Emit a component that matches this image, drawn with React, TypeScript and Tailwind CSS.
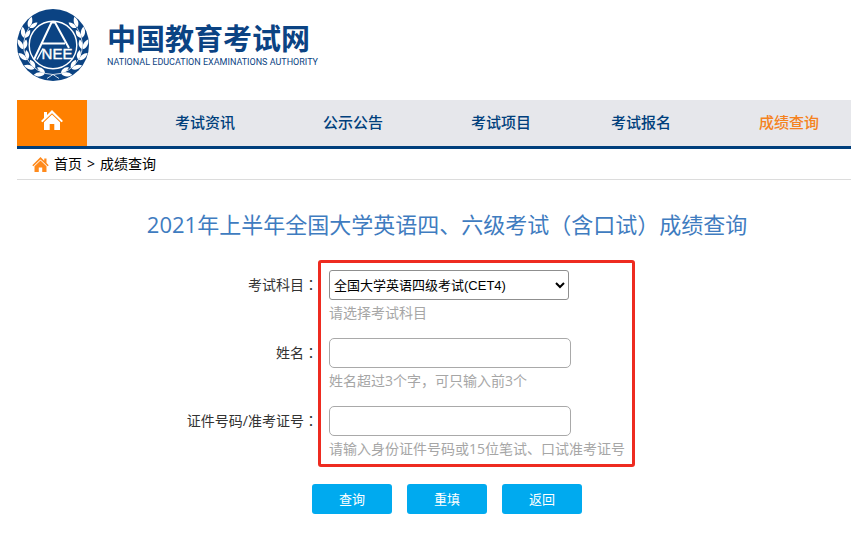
import type { ReactNode } from "react";

const navItems = [
  { label: "考试资讯", className: "pl-22 text-[#003f7c]" },
  { label: "公示公告", className: "pl-22 text-[#003f7c]" },
  { label: "考试项目", className: "pl-22 text-[#003f7c]" },
  { label: "考试报名", className: "pl-20 text-[#003f7c]" },
  { label: "成绩查询", className: "pl-22 text-[#f58220]" },
];

const fields = [
  { id: "subject", label: "考试科目", hint: "请选择考试科目" },
  { id: "name", label: "姓名", hint: "姓名超过3个字，可只输入前3个" },
  {
    id: "ticket",
    label: "证件号码/准考证号",
    hint: "请输入身份证件号码或15位笔试、口试准考证号",
  },
];

// angle around the emblem, measured from the bottom
const leafAngles = [14, 36, 58, 80, 102, 124];

function Branch() {
  return (
    <g>
      <path
        d="M42 69.5 L36 65.5 A29.5 29.5 0 0 1 12 19"
        fill="none"
        stroke="#fff"
        strokeWidth="0.8"
      />
      {leafAngles.map((angle) => (
        <g key={angle} transform={`rotate(${angle} 36 36)`} fill="#fff">
          <path d="M35 65 C33 60.5 29 60.5 26 61.5 C28 64.5 31 66 35 65 Z" />
          <path d="M35 66 C33 70.5 28 71 24.5 69.5 C27 66 31 64.5 35 66 Z" />
        </g>
      ))}
    </g>
  );
}

function Emblem() {
  return (
    <svg viewBox="0 0 72 72" className="h-[72px] w-[72px]" aria-hidden="true">
      <circle cx="36" cy="36" r="36" fill="#0b4383" />
      <Branch />
      <g transform="translate(72 0) scale(-1 1)">
        <Branch />
      </g>
      <circle
        cx="36"
        cy="36"
        r="23.8"
        fill="#0b4383"
        stroke="#fff"
        strokeWidth="1.4"
      />
      <path
        d="M17 50.5 L34.5 13.5 H38 L52 39 M25 34.5 H48"
        fill="none"
        stroke="#fff"
        strokeWidth="2"
      />
      <path
        d="M20 50.5 L26 39.5"
        fill="none"
        stroke="#fff"
        strokeWidth="1.4"
      />
      <text
        x="40"
        y="50"
        textAnchor="middle"
        fill="#fff"
        stroke="#fff"
        strokeWidth="0.4"
        className="font-['Liberation_Sans'] text-[15px]"
      >
        NEE
      </text>
    </svg>
  );
}

function HomeIcon({ className }: { className: string }) {
  return (
    <svg viewBox="0 0 22 20" className={className} aria-hidden="true">
      <path
        fill="currentColor"
        d="M11 0 L16 5 V2 H19 V8 L22 11 L20.5 12.3 L11 3.2 L1.5 12.3 L0 11 Z"
      />
      <path
        fill="currentColor"
        d="M11 4.6 L19 12.2 V20 H13.3 V14 H8.7 V20 H3 V12.2 Z"
      />
    </svg>
  );
}

function ActionButton({
  type = "button",
  children,
}: {
  type?: "button" | "submit" | "reset";
  children: ReactNode;
}) {
  return (
    <button
      type={type}
      className="h-[30px] w-20 rounded-[3px] bg-[#00aaef] text-[13px] text-white"
    >
      {children}
    </button>
  );
}

export default function App() {
  return (
    <div className="bg-white pl-[17px] font-['Open_Sans','Noto_Sans_CJK_SC',sans-serif] text-sm text-black">
      <header className="flex h-[100px] items-start gap-[18px] pt-[9px]">
        <Emblem />
        <div className="pt-3 text-[#0b4383]">
          <div className="text-[29px] leading-9 font-bold">中国教育考试网</div>
          <div className="font-['Roboto','Liberation_Sans',sans-serif] text-[9px] leading-[10px] whitespace-nowrap">
            NATIONAL EDUCATION EXAMINATIONS AUTHORITY
          </div>
        </div>
      </header>

      <nav className="flex h-[49px] border-b-3 border-[#003f7c] bg-[#e6e7eb]">
        <a
          href="#"
          aria-label="首页"
          className="flex w-[70px] justify-center bg-[#ff8000] pt-2.5 text-white"
        >
          <HomeIcon className="h-5 w-[22px] -scale-x-100" />
        </a>
        <ul className="flex items-center text-[15px] font-medium whitespace-nowrap">
          {navItems.map((item) => (
            <li key={item.label} className={item.className}>
              <a href="#">{item.label}</a>
            </li>
          ))}
        </ul>
      </nav>

      <div className="flex h-[31px] items-center border-b border-[#dcdcdc] pl-[15px]">
        <HomeIcon className="h-[15px] w-[17px] text-[#ff8a1c]" />
        <a href="#" className="pl-[5px]">
          首页
        </a>
        <span className="px-[5px] text-sm">&gt;</span>
        <span>成绩查询</span>
      </div>

      <main>
        <h1 className="pt-[26px] pl-[26px] text-center text-[22px] leading-9 text-[#3f7cc0]">
          2021年上半年全国大学英语四、六级考试（含口试）成绩查询
        </h1>
        <form onSubmit={(e) => e.preventDefault()}>
          <div className="flex pt-[18px]">
            <div className="grid w-[301px] auto-rows-[30px] content-start gap-[38px] pt-[9px] text-right leading-[30px] text-[#333]">
              {fields.map((field) => (
                <label key={field.id} htmlFor={field.id}>
                  {field.label}
                  <span className="font-['Noto_Sans_CJK_JP']">：</span>
                </label>
              ))}
            </div>
            <div className="w-[317px] rounded-[3px] border-3 border-[#ee2b20] pt-[7px] pl-2">
              <div className="grid gap-3 pb-[2px]">
                {fields.map((field) => (
                  <div key={field.id}>
                    {field.id === "subject" ? (
                      <select
                        id={field.id}
                        className="block h-[30px] w-60 rounded-[3px] border border-[#8f8f8f] bg-white font-['Liberation_Sans','Noto_Sans_CJK_SC',sans-serif] text-[13px]"
                      >
                        <option>全国大学英语四级考试(CET4)</option>
                        <option>全国大学英语六级考试(CET6)</option>
                      </select>
                    ) : (
                      <input
                        id={field.id}
                        type="text"
                        className="block h-[30px] w-[242px] rounded-[5px] border border-[#a9a9a9] px-2"
                      />
                    )}
                    <p className="leading-[26px] whitespace-nowrap text-[#a6a6a6]">
                      {field.hint}
                    </p>
                  </div>
                ))}
              </div>
            </div>
          </div>
          <div className="flex gap-[15px] pt-[17px] pl-[295px]">
            <ActionButton type="submit">查询</ActionButton>
            <ActionButton type="reset">重填</ActionButton>
            <ActionButton>返回</ActionButton>
          </div>
        </form>
      </main>
    </div>
  );
}
